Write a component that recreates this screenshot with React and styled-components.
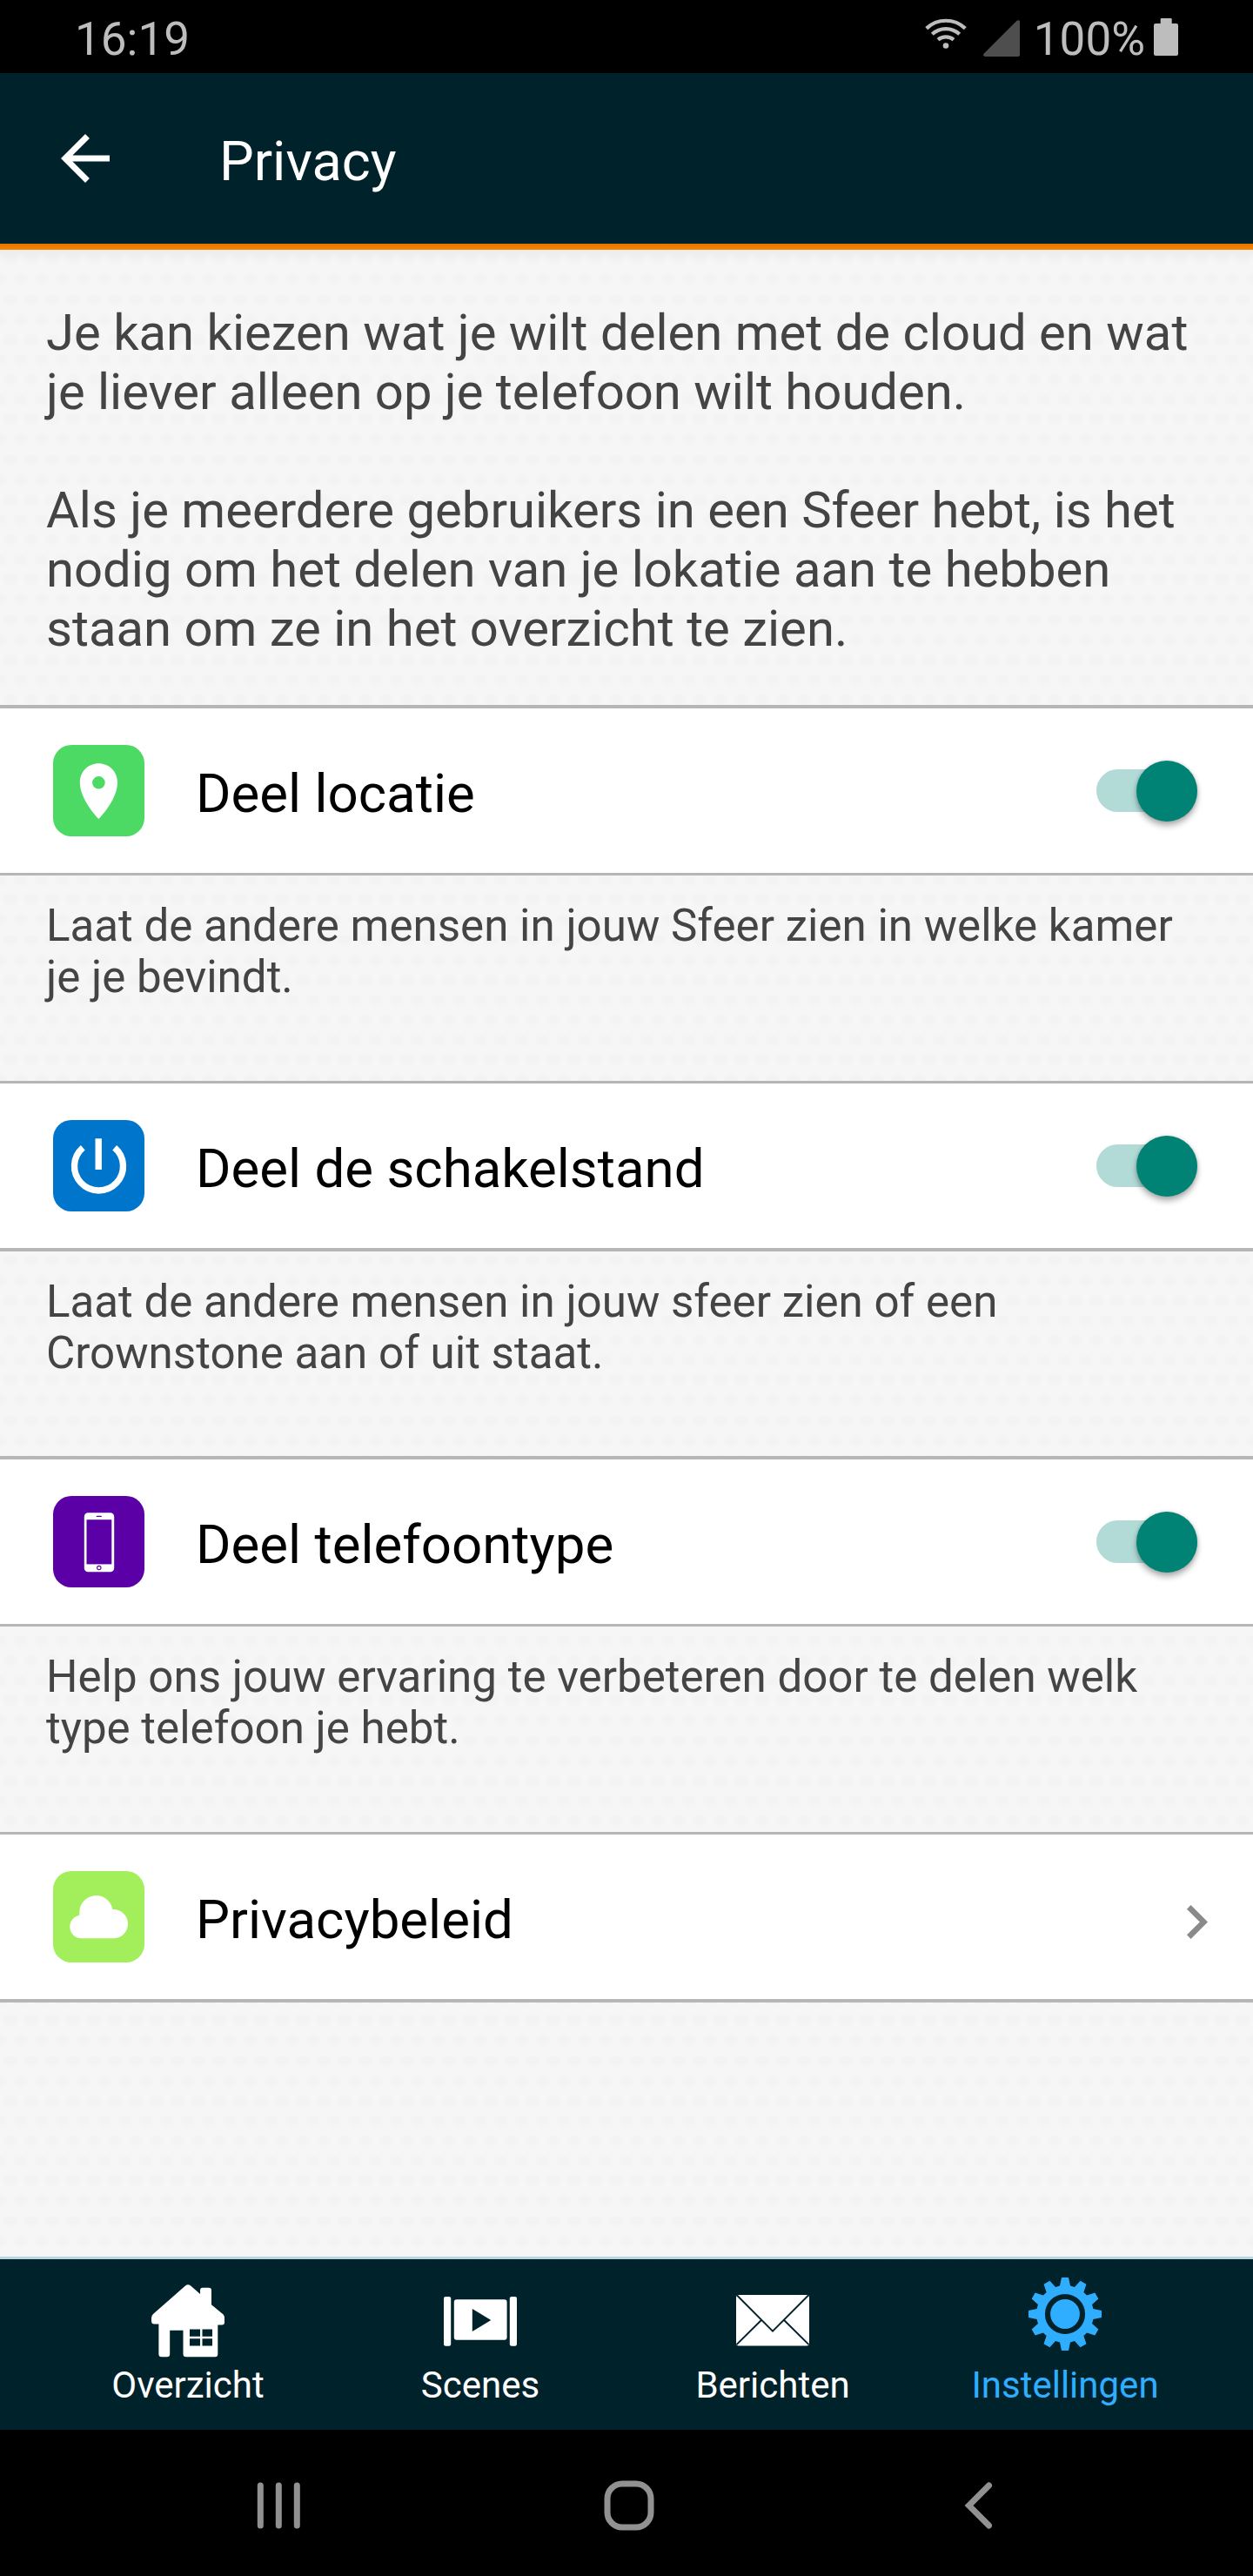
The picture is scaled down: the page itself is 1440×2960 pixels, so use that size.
import React from "react";
import styled, { createGlobalStyle } from "styled-components";

const GlobalStyle = createGlobalStyle`
  * { box-sizing: border-box; }
  body {
    margin: 0;
    background: #f5f5f5;
    font-family: Roboto, "Noto Sans", sans-serif;
    font-weight: 400;
  }
`;

const navy = "#00222b";

const Screen = styled.div`
  width: 1440px;
  height: 2960px;
  display: flex;
  flex-direction: column;
  overflow: hidden;
`;

const StatusBar = styled.div`
  height: 84px;
  flex: none;
  background: #000;
  color: #bdbdbd;
  display: flex;
  align-items: flex-start;
  justify-content: space-between;
  padding: 14px 86px 0 86px;
  font-size: 53px;
  line-height: 62px;
`;

const StatusGroup = styled.div`
  display: flex;
  align-items: flex-start;
`;

const BatteryLevel = styled.span`
  margin-right: 10px;
`;

const StatusIcon = styled.svg`
  display: block;
  flex: none;
  margin-top: ${(p) => p.$top}px;
  margin-right: ${(p) => p.$right || 0}px;
`;

const Header = styled.header`
  height: 196px;
  flex: none;
  background: ${navy};
  display: flex;
  align-items: center;
  gap: 112px;
  padding-left: 56px;
`;

const AccentLine = styled.div`
  height: 7px;
  flex: none;
  background: linear-gradient(#e67600, #fa8200);
`;

const BackIcon = styled.svg`
  width: 84px;
  height: 84px;
`;

const Title = styled.h1`
  margin: 0;
  padding-top: 7px;
  font-size: 63px;
  line-height: 74px;
  font-weight: 400;
  color: #fff;
`;

const Content = styled.main`
  flex: 1;
  min-height: 0;
  background-color: #f6f6f6;
  background-image: linear-gradient(rgba(0, 0, 0, 0.04), rgba(0, 0, 0, 0)),
    radial-gradient(ellipse 10px 8px at 12px 11px, #f3f3f3 50%, rgba(243, 243, 243, 0) 100%),
    radial-gradient(ellipse 10px 8px at 12px 11px, #f3f3f3 50%, rgba(243, 243, 243, 0) 100%);
  background-size: 100% 14px, 24px 46px, 24px 46px;
  background-position: 0 0, 0 0, 12px 23px;
  background-repeat: no-repeat, repeat, repeat;
`;

const Intro = styled.div`
  height: 523px;
  padding: 61px 0 0 53px;
  color: #444;
  font-size: 58px;
  line-height: 68px;
  white-space: pre;
`;

const Row = styled.div`
  display: flex;
  align-items: center;
  height: ${(p) => 189 + p.$top + p.$bottom}px;
  padding: 0 ${(p) => p.$right}px 0 61px;
  background: #fff;
  border-style: solid;
  border-color: #b6b6b6;
  border-width: ${(p) => p.$top}px 0 ${(p) => p.$bottom}px;
`;

const Tile = styled.svg`
  width: 105px;
  height: 105px;
  border-radius: 21px;
  background: ${(p) => p.$color};
  flex: none;
`;

const Label = styled.div`
  flex: 1;
  padding: 6px 0 0 59px;
  font-size: 61.8px;
  line-height: 74px;
  color: #000;
`;

const Note = styled.div`
  height: ${(p) => p.$height}px;
  padding: 28px 0 0 53px;
  color: #444;
  font-size: 51.1px;
  line-height: 59px;
  white-space: pre;
`;

const Track = styled.div`
  width: 116px;
  height: 49px;
  border-radius: 25px;
  background: #b2dbd7;
  display: flex;
  align-items: center;
  justify-content: flex-end;
`;

const Thumb = styled.div`
  width: 70px;
  height: 70px;
  flex: none;
  border-radius: 50%;
  background: #008375;
  box-shadow: 0 5px 7px rgba(0, 0, 0, 0.3), 0 0 4px rgba(0, 0, 0, 0.15);
`;

const Chevron = styled.svg`
  width: 24px;
  height: 39px;
  margin-top: 12px;
`;

const TabBar = styled.nav`
  height: 199px;
  flex: none;
  background: ${navy};
  border-top: 3px solid #b8d8e0;
  display: flex;
  padding: 0 48px;
`;

const Tab = styled.div`
  width: 336px;
  display: flex;
  flex-direction: column;
  align-items: center;
  padding-top: ${(p) => (p.$raised ? 21 : 29)}px;
  gap: ${(p) => (p.$raised ? 15 : 7)}px;
  font-size: 42px;
  line-height: 50px;
  color: ${(p) => (p.$active ? "#2faeff" : "#fff")};
`;

const TabIcon = styled.svg`
  width: 84px;
  height: 84px;
  flex: none;
`;

const NavBar = styled.div`
  height: 168px;
  flex: none;
  background: #000;
  display: flex;
  align-items: center;
  justify-content: space-between;
  padding: 5px 285px 0 290px;
`;

const NavIcon = styled.svg`
  width: 60px;
  height: 60px;
  fill: none;
  stroke: #919191;
  stroke-width: 7;
  stroke-linecap: round;
`;

function PinIcon() {
  return (
    <Tile $color="#4cd964" viewBox="0 0 105 105">
      <path
        fill="#fff"
        fillRule="evenodd"
        d="M52.4 21.3C40.4 21.3 30.8 30.6 30.8 42.9C30.8 58 43 75 52.4 85C62 75 74 58 74 42.9C74 30.6 64.4 21.3 52.4 21.3ZM52.4 36a7.3 7.3 0 1 1 0 14.6a7.3 7.3 0 0 1 0-14.6Z"
      />
    </Tile>
  );
}

function PowerIcon() {
  return (
    <Tile $color="#0075cc" viewBox="0 0 105 105" fill="none" stroke="#fff" strokeWidth="7.4">
      <path d="M52.2 21.3V57M34.3 31.7A28 28 0 1 0 70.7 31.7" />
    </Tile>
  );
}

function PhoneIcon() {
  return (
    <Tile $color="#5a00a6" viewBox="0 0 105 105">
      <rect x="35.8" y="19.2" width="34.4" height="68" rx="4.5" fill="#fff" />
      <rect x="38.5" y="27.2" width="28.8" height="51.2" fill="#5a00a6" />
      <path d="M50.3 23.4h5" stroke="#5a00a6" strokeWidth="1.2" strokeLinecap="round" />
      <circle cx="52.8" cy="82.6" r="2.2" fill="none" stroke="#5a00a6" strokeWidth="1.1" />
    </Tile>
  );
}

function CloudIcon() {
  return (
    <Tile $color="#a2ef5b" viewBox="0 0 105 105">
      <path
        fill="#fff"
        d="M32.4 77.3A13.35 13.35 0 0 1 30.3 50.8V48A19.2 19.2 0 0 1 68.4 44H69.4A16.65 16.65 0 0 1 69.4 77.3Z"
      />
    </Tile>
  );
}

function HouseIcon() {
  return (
    <TabIcon viewBox="0 0 84 84" fill="currentColor">
      <path
        fillRule="evenodd"
        d="M39 1.4Q42 -1 45.2 1.4L56 11V7Q56 3.8 59 3.8H66Q69 3.8 69 7V23.2L82.6 34.4Q84 36 84 38V43.5Q84 46.5 81 46.5H76.3V80Q76.3 83.3 73 83.3H40Q36.5 83.3 36.5 80V52.8H21.2V80Q21.2 83.3 18 83.3H11.6Q8.4 83.3 8.4 80V45.6H3.4Q0 45.6 0 42V38.4Q0 36 2 34ZM44 51.5V59.7H56V51.5ZM58.5 51.5V59.7H70V51.5ZM44 62.3V70.5H56V62.3ZM58.5 62.3V70.5H70V62.3Z"
      />
    </TabIcon>
  );
}

function ScenesIcon() {
  return (
    <TabIcon viewBox="0 0 84 84" fill="currentColor">
      <rect x="0" y="14" width="8.2" height="56.7" rx="2.2" />
      <rect x="75.8" y="14" width="8.2" height="56.7" rx="2.2" />
      <rect x="11.8" y="17.3" width="60.8" height="46.4" rx="3" />
      <path d="M32.8 28L54.3 41L32.8 54Z" fill={navy} />
    </TabIcon>
  );
}

function MailIcon() {
  return (
    <TabIcon viewBox="0 0 84 84">
      <rect x="0" y="12" width="84" height="58.5" rx="3" fill="currentColor" />
      <path d="M1 12.5L42 53.7L83 12.5M28.9 41L0.5 69M55.1 41L83.5 69" fill="none" stroke={navy} strokeWidth="1.9" />
    </TabIcon>
  );
}

const gearPath = (() => {
  const points = [];
  for (let i = 0; i < 12; i += 1) {
    const a = (i * Math.PI) / 6;
    [
      [-6, -32.4],
      [-4, -42],
      [4, -42],
      [6, -32.4],
    ].forEach(([x, y]) => {
      const px = 42 + x * Math.cos(a) - y * Math.sin(a);
      const py = 42 + x * Math.sin(a) + y * Math.cos(a);
      points.push(`${px.toFixed(2)} ${py.toFixed(2)}`);
    });
  }
  return `M${points.join("L")}Z`;
})();

function GearIcon() {
  return (
    <TabIcon viewBox="0 0 84 84" fill="currentColor">
      <path d={gearPath} />
      <circle cx="42" cy="42" r="20" fill="none" stroke={navy} strokeWidth="6.2" />
    </TabIcon>
  );
}

function Switch() {
  return (
    <Track>
      <Thumb />
    </Track>
  );
}

export default function App() {
  return (
    <>
      <GlobalStyle />
      <Screen>
        <StatusBar>
          <span>16:19</span>
          <StatusGroup>
            <StatusIcon $top={7} $right={19} width="48" height="36" viewBox="0 0 48 36" fill="none" stroke="#bdbdbd" strokeWidth="4.2">
              <path d="M1.7 11.6A32.5 32.5 0 0 1 46.3 11.6M8.3 18.2A23.2 23.2 0 0 1 39.7 18.2M15 24.6A14 14 0 0 1 33 24.6" />
              <circle cx="24" cy="31.5" r="3.3" fill="#bdbdbd" stroke="none" />
            </StatusIcon>
            <StatusIcon $top={9} $right={16} width="42" height="42" viewBox="0 0 42 42">
              <path d="M2 42Q-1 41 .8 38.6L38.6 .8Q42 -1 42 2V40Q42 42 40 42Z" fill="#4e4e4e" />
            </StatusIcon>
            <BatteryLevel>100%</BatteryLevel>
            <StatusIcon $top={7} width="28" height="43" viewBox="0 0 28 43" fill="#bdbdbd">
              <rect x="7.7" y="0" width="13" height="9" rx="1" />
              <rect x="0" y="6" width="28" height="37" rx="2" />
            </StatusIcon>
          </StatusGroup>
        </StatusBar>

        <Header>
          <BackIcon viewBox="0 0 24 24" fill="#fff">
            <path d="M20 11H7.83l5.59-5.59L12 4l-8 8 8 8 1.41-1.41L7.83 13H20v-2z" />
          </BackIcon>
          <Title>Privacy</Title>
        </Header>
        <AccentLine />

        <Content>
          <Intro>
            {"Je kan kiezen wat je wilt delen met de cloud en wat\nje liever alleen op je telefoon wilt houden.\n\nAls je meerdere gebruikers in een Sfeer hebt, is het\nnodig om het delen van je lokatie aan te hebben\nstaan om ze in het overzicht te zien."}
          </Intro>

          <Row $top={4} $bottom={3} $right={64}>
            <PinIcon />
            <Label>Deel locatie</Label>
            <Switch />
          </Row>
          <Note $height={236}>
            {"Laat de andere mensen in jouw Sfeer zien in welke kamer\nje je bevindt."}
          </Note>

          <Row $top={3} $bottom={4} $right={64}>
            <PowerIcon />
            <Label>Deel de schakelstand</Label>
            <Switch />
          </Row>
          <Note $height={235}>
            {"Laat de andere mensen in jouw sfeer zien of een\nCrownstone aan of uit staat."}
          </Note>

          <Row $top={4} $bottom={3} $right={64}>
            <PhoneIcon />
            <Label>Deel telefoontype</Label>
            <Switch />
          </Row>
          <Note $height={236}>
            {"Help ons jouw ervaring te verbeteren door te delen welk\ntype telefoon je hebt."}
          </Note>

          <Row $top={3} $bottom={4} $right={52}>
            <CloudIcon />
            <Label>Privacybeleid</Label>
            <Chevron viewBox="8.59 6 7.41 12" fill="#8a8a8a">
              <path d="M10 6L8.59 7.41 13.17 12l-4.58 4.59L10 18l6-6z" />
            </Chevron>
          </Row>
        </Content>

        <TabBar>
          <Tab>
            <HouseIcon />
            Overzicht
          </Tab>
          <Tab>
            <ScenesIcon />
            Scenes
          </Tab>
          <Tab>
            <MailIcon />
            Berichten
          </Tab>
          <Tab $active $raised>
            <GearIcon />
            Instellingen
          </Tab>
        </TabBar>

        <NavBar>
          <NavIcon viewBox="0 0 60 60">
            <path d="M9.3 7V53M30.3 7V53M51.3 7V53" />
          </NavIcon>
          <NavIcon viewBox="0 0 60 60">
            <rect x="5" y="5" width="50" height="50" rx="17" />
          </NavIcon>
          <NavIcon viewBox="0 0 60 60">
            <path d="M41.5 7L18.5 30L41.5 53" strokeLinejoin="miter" />
          </NavIcon>
        </NavBar>
      </Screen>
    </>
  );
}
